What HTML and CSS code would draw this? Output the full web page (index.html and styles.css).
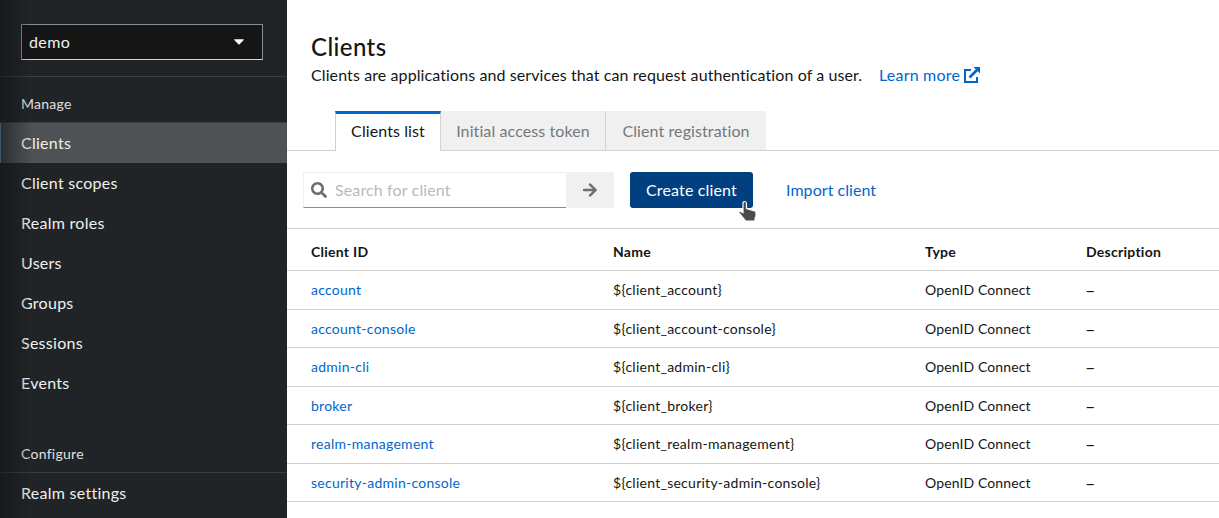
FILE: index.html
```
<!DOCTYPE html>
<html lang="en">
<head>
<meta charset="utf-8">
<title>Clients</title>
<link rel="stylesheet" href="styles.css">
</head>
<body>
<div class="page">
  <aside class="sidebar">
    <div class="realm">
      <button class="realm-select"><span>demo</span>
        <svg class="caret" width="10" height="6" viewBox="0 0 10 6"><path d="M.6.2h8.8q.8.2.3.9L5.6 5.2q-.6.5-1.2 0L.3 1.1Q-.2.4.6.2z" fill="#fff"/></svg>
      </button>
    </div>
    <nav>
      <h2 class="nav-title">Manage</h2>
      <ul class="nav-list">
        <li class="nav-item current">Clients</li>
        <li class="nav-item">Client scopes</li>
        <li class="nav-item">Realm roles</li>
        <li class="nav-item">Users</li>
        <li class="nav-item">Groups</li>
        <li class="nav-item">Sessions</li>
        <li class="nav-item">Events</li>
      </ul>
      <h2 class="nav-title second">Configure</h2>
      <ul class="nav-list">
        <li class="nav-item">Realm settings</li>
      </ul>
    </nav>
  </aside>
  <main class="main">
    <header class="header">
      <h1>Clients</h1>
      <p class="intro"><span class="desc">Clients are applications and services that can request authentication of a user.</span>
        <a class="learn"><span>Learn more</span>
          <svg width="16" height="16" viewBox="0 0 16 16"><path d="M7 3H1v12h12v-5" fill="none" stroke="#06c" stroke-width="2"/><path d="M5.500 10.500 13 3" stroke="#06c" stroke-width="2.600"/><path d="M9.500 0H16v6.500z" fill="#06c"/></svg>
        </a></p>
    </header>
    <div class="tabs">
      <div class="tab active">Clients list</div>
      <div class="tab t2">Initial access token</div>
      <div class="tab t3">Client registration</div>
    </div>
    <div class="toolbar">
      <div class="search">
        <svg width="16" height="16" viewBox="0 0 512 512"><path fill="#6a6e73" d="M505 442.700L405.300 343c-4.500-4.500-10.600-7-17-7H372c27.600-35.300 44-79.700 44-128C416 93.100 322.900 0 208 0S0 93.100 0 208s93.100 208 208 208c48.300 0 92.700-16.400 128-44v16.300c0 6.400 2.500 12.500 7 17l99.700 99.700c9.400 9.400 24.600 9.400 33.900 0l28.300-28.300c9.400-9.400 9.400-24.600.1-34zM208 336c-70.700 0-128-57.200-128-128 0-70.700 57.200-128 128-128 70.700 0 128 57.200 128 128 0 70.700-57.200 128-128 128z"/></svg>
        <span>Search for client</span>
      </div>
      <div class="go">
        <svg width="14" height="16" viewBox="0 0 448 512"><path fill="#6a6e73" d="M190.500 66.900l22.200-22.200c9.400-9.400 24.600-9.400 33.900 0L441 239c9.400 9.400 9.400 24.600 0 33.900L246.600 467.300c-9.400 9.400-24.600 9.400-33.900 0l-22.200-22.200c-9.500-9.500-9.300-25 .4-34.300L311.400 296H24c-13.300 0-24-10.700-24-24v-32c0-13.300 10.700-24 24-24h287.400L190.900 101.200c-9.800-9.300-10-24.800-.4-34.300z"/></svg>
      </div>
      <button class="create"><span>Create client</span></button>
      <a class="import">Import client</a>
    </div>
    <div class="table">
      <div class="row head"><span>Client ID</span><span>Name</span><span>Type</span><span>Description</span></div>
      <div class="row"><a>account</a><span>${client_account}</span><span class="type">OpenID Connect</span><span class="dash">–</span></div>
      <div class="row"><a>account-console</a><span>${client_account-console}</span><span class="type">OpenID Connect</span><span class="dash">–</span></div>
      <div class="row"><a>admin-cli</a><span>${client_admin-cli}</span><span class="type">OpenID Connect</span><span class="dash">–</span></div>
      <div class="row"><a>broker</a><span>${client_broker}</span><span class="type">OpenID Connect</span><span class="dash">–</span></div>
      <div class="row"><a>realm-management</a><span>${client_realm-management}</span><span class="type">OpenID Connect</span><span class="dash">–</span></div>
      <div class="row"><a>security-admin-console</a><span>${client_security-admin-console}</span><span class="type">OpenID Connect</span><span class="dash">–</span></div>
    </div>
  </main>
  <svg class="pointer" width="22" height="24" viewBox="0 0 22 24"><path d="M6 3.500q0-2 1.700-2t1.800 2v5l8 2.300q1.600.5 1.500 2.200v3l-1 2.500V21H8.500L2 13q-1.200-2 1-2l3 1.700z" fill="#4c4c4c" stroke="#fff" stroke-width="1.200"/></svg>
</div>
</body>
</html>
```
FILE: styles.css
```
* { box-sizing: border-box; }
body { margin: 0; background: #fff; color: #151515; font-family: Lato, "Open Sans", sans-serif; font-size: 16px; line-height: 24px; letter-spacing: .1px; }
h1, h2, p, ul { margin: 0; padding: 0; font-weight: 400; }
ul { list-style: none; }
button { font: inherit; letter-spacing: inherit; }
svg { display: block; flex: none; }
.page { position: relative; display: flex; width: 1219px; height: 518px; overflow: hidden; white-space: nowrap; }
.sidebar { flex: 0 0 287px; height: 518px; background: #212427; color: #f0f0f0; position: relative; letter-spacing: .27px; }
.sidebar::after { content: ""; position: absolute; inset: 0 auto 0 0; width: 32px; background: linear-gradient(90deg, rgba(18,18,20,.6), rgba(24,24,28,0)); }
.realm { height: 77px; padding: 24px 24px 0 21px; border-bottom: 1px solid #3c3f42; }
.realm-select { display: flex; align-items: center; justify-content: space-between; width: 242px; height: 36px; padding: 0 18px 0 7px; background: #151515; color: #f0f0f0; border: 1px solid #8a8d90; border-bottom-color: #d2d2d2; letter-spacing: .4px; }
.nav-title { height: 46px; padding: 16px 0 0 21px; font-size: 14px; line-height: 21px; border-bottom: 1px solid #3c3f42; color: #e0e0e0; }
.nav-title.second { margin-top: 24px; }
.nav-item { height: 40px; padding: 8px 0 8px 21px; }
.nav-item.current { background: #4f5255; box-shadow: inset 1px 0 #73bcf7; }
.main { flex: 1; }
.header { height: 111px; padding: 31px 0 0 24px; }
h1 { height: 32px; font-size: 24px; line-height: 31px; font-weight: 500; letter-spacing: .4px; }
.intro { display: flex; }
.desc { width: 568px; }
.learn { display: flex; gap: 4px; align-items: center; color: #06c; letter-spacing: .2px; }
.tabs { display: flex; height: 40px; padding-left: 48px; border-bottom: 1px solid #d2d2d2; }
.tab { height: 39px; padding-top: 8px; background: #f0f0f0; color: #74787c; text-align: center; }
.tab.active { width: 106px; height: 40px; padding-top: 5px; background: #fff; color: #151515; border: solid #d2d2d2; border-width: 3px 1px 0; border-top-color: #06c; }
.t2 { width: 165px; border-right: 1px solid #d2d2d2; }
.t3 { width: 160px; }
.toolbar { display: flex; height: 77px; padding: 21px 0 0 16px; line-height: 36px; }
.search { display: flex; align-items: center; gap: 8px; width: 263px; height: 36px; padding-left: 7px; border: 1px solid #f0f0f0; border-bottom-color: #8a8d90; border-right: 0; color: #b8babd; letter-spacing: .13px; }
.go { display: flex; align-items: center; justify-content: center; width: 48px; height: 36px; background: #f0f0f0; }
.create { width: 123px; height: 36px; margin: 0 33px 0 16px; padding: 0; background: #004080; color: #fff; border: 0; border-radius: 3px; letter-spacing: .15px; }
.import, .row a { color: #06c; }
.import { letter-spacing: .05px; }
.table { border-top: 1px solid #d2d2d2; font-size: 14px; letter-spacing: .26px; }
.row { display: grid; grid-template-columns: 302px 312px 161px 1fr; height: 38.5px; align-items: center; padding: .6px 0 0 24px; border-bottom: 1px solid #d2d2d2; }
.row.head { height: 42px; padding-top: 4px; font-weight: 700; }
.type { letter-spacing: .12px; }
.dash { margin-left: -1px; font-size: 18px; }
.pointer { position: absolute; left: 737px; top: 200px; }
```
